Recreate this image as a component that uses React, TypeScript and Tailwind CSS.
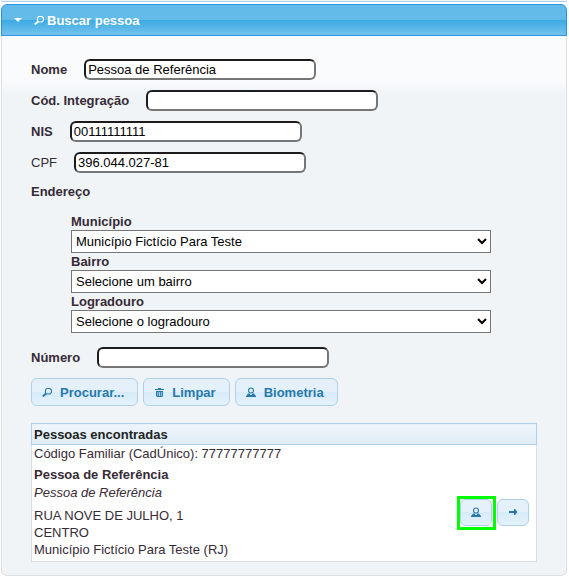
import { useState } from "react";
import type { ReactNode } from "react";

const SearchIcon = () => (
  <svg width="10" height="10" viewBox="0 0 10 10" fill="none" stroke="currentColor" aria-hidden="true">
    <path d="M4.500 1.500h3.500l1.500 1.500v2.500l-1.500 1.500H4.500l-1-1.500V3z" strokeWidth="1.100" />
    <path d="M4 6.500L.8 9.500" strokeWidth="1.900" />
  </svg>
);

const TrashIcon = () => (
  <svg width="10" height="10" viewBox="0 0 10 10" fill="currentColor" aria-hidden="true">
    <path d="M4 1h3v1h3v1H1V2h3z" />
    <path d="M2 4h7v5l-1 1H3L2 9zM3.500 5v4h.7V5zM5.200 5v4h.7V5zM6.900 5v4h.7V5z" fillRule="evenodd" />
  </svg>
);

const PersonIcon = () => (
  <svg width="10" height="10" viewBox="0 0 10 10" aria-hidden="true">
    <circle cx="5" cy="3.500" r="2.500" fill="none" stroke="currentColor" strokeWidth="1.100" />
    <path d="M2 6.500h1.500L4.500 8h1l1-1.500H8L9 8l1 1v1H0V9l1-1z" fill="currentColor" />
  </svg>
);

const ArrowIcon = () => (
  <svg width="10" height="10" viewBox="0 0 10 10" fill="currentColor" aria-hidden="true">
    <path d="M1 4h5V2h1l2.500 3L7 8H6V6H1z" />
  </svg>
);

const buttonLook =
  "flex items-center rounded-md border border-[#aed0ea] bg-[linear-gradient(#e4f1fb_50%,#d7ebf9_50%,#e4f2fc)] text-[#2779aa] hover:border-[#74b2e2]";

type FieldProps = {
  id: string;
  label: string;
  value?: string;
  bold?: boolean;
};

const Field = ({ id, label, value = "", bold = true }: FieldProps) => {
  const [text, setText] = useState(value);

  return (
    <div className="flex h-[21px] items-center gap-[17px]">
      <label htmlFor={id} className={bold ? "font-bold" : "font-normal"}>
        {label}
      </label>
      <input
        id={id}
        type="text"
        value={text}
        onChange={(e) => setText(e.target.value)}
        className="h-[21px] w-[232px] rounded-md border-2 border-t-[#1c1c1c] border-r-[#767676] border-b-[#767676] border-l-[#1c1c1c] bg-white px-[2px] text-black"
      />
    </div>
  );
};

const SelectField = ({ id, label, option }: { id: string; label: string; option: string }) => (
  <div>
    <label htmlFor={id} className="block leading-[17px] font-bold">
      {label}
    </label>
    <select
      id={id}
      className="block h-[23px] w-full rounded-none border border-[#767676] bg-white text-black"
    >
      <option>{option}</option>
    </select>
  </div>
);

const TextButton = ({ icon, children }: { icon: ReactNode; children: string }) => (
  <button
    type="button"
    className={`${buttonLook} h-7 gap-2 pr-[13px] pl-[10px] font-bold`}
  >
    {icon}
    {children}
  </button>
);

const IconButton = ({ icon, label }: { icon: ReactNode; label: string }) => (
  <button
    type="button"
    aria-label={label}
    className={`${buttonLook} h-[27px] w-8 justify-center`}
  >
    {icon}
  </button>
);

const App = () => {
  return (
    <div className="min-h-screen bg-white pr-[2px] pl-[1px] font-['Liberation_Sans',Arial,sans-serif] text-[13px] leading-[17px] text-[#362b36]">
      <div className="mb-[2px] h-[2px] rounded-b-md border-b border-[#aed0ea] bg-[#eef5fa]" />
      <section>
        <h3 className="flex h-8 items-center rounded-t-md border border-[#2694e8] bg-[linear-gradient(#63bbe9_50%,#3baae3_50%,#74c2ec)] pl-3 font-bold text-white">
          <svg width="8" height="4" viewBox="0 0 8 4" fill="currentColor" aria-hidden="true">
            <path d="M0 0h8L4 4z" />
          </svg>
          <span className="ml-3 flex items-center gap-[3px]">
            <SearchIcon />
            Buscar pessoa
          </span>
        </h3>
        <form
          className="rounded-b-md border border-t-0 border-[#dddddd] bg-[#f0f4f7] bg-[linear-gradient(#fafbfd_0px,#fafbfd_42px,#f0f4f7_60px)] px-[29px] pt-[23px] pb-[13px]"
          onSubmit={(e) => e.preventDefault()}
        >
          <div className="flex flex-col gap-[10px]">
            <Field id="nome" label="Nome" value="Pessoa de Referência" />
            <Field id="integracao" label="Cód. Integração" />
            <Field id="nis" label="NIS" value="00111111111" />
            <Field id="cpf" label="CPF" value="396.044.027-81" bold={false} />
          </div>
          <fieldset className="mt-[10px]">
            <legend className="font-bold">Endereço</legend>
            <div className="mt-[13px] mr-[46px] ml-10 flex flex-col">
              <SelectField id="municipio" label="Município" option="Município Fictício Para Teste" />
              <SelectField id="bairro" label="Bairro" option="Selecione um bairro" />
              <SelectField id="logradouro" label="Logradouro" option="Selecione o logradouro" />
            </div>
          </fieldset>
          <div className="mt-[14px]">
            <Field id="numero" label="Número" />
          </div>
          <div className="mt-[10px] flex gap-[5px]">
            <TextButton icon={<SearchIcon />}>Procurar...</TextButton>
            <TextButton icon={<TrashIcon />}>Limpar</TextButton>
            <TextButton icon={<PersonIcon />}>Biometria</TextButton>
          </div>
          <table className="mt-[17px] w-full border-collapse border border-[#dddddd] bg-white text-left">
            <thead>
              <tr>
                <th
                  scope="col"
                  colSpan={2}
                  className="h-[21px] border border-[#aed0ea] bg-[linear-gradient(#eff6fc,#deedf7)] px-[2px] text-[#222222]"
                >
                  Pessoas encontradas
                </th>
              </tr>
            </thead>
            <tbody>
              <tr>
                <td className="px-[2px] pb-[3px]">
                  <p>Código Familiar (CadÚnico): 77777777777</p>
                  <p className="mt-1 font-bold">Pessoa de Referência</p>
                  <p className="mt-[1px] italic">Pessoa de Referência</p>
                  <p className="mt-[6px]">
                    RUA NOVE DE JULHO, 1
                    <br />
                    CENTRO
                    <br />
                    Município Fictício Para Teste (RJ)
                  </p>
                </td>
                <td className="pt-[18px] pr-[7px]">
                  <div className="flex justify-end gap-[5px]">
                    <div className="relative">
                      <IconButton icon={<PersonIcon />} label="Biometria" />
                      <span className="pointer-events-none absolute -inset-[3px] -right-1 -bottom-1 border-3 border-[#00ff00]" />
                    </div>
                    <IconButton icon={<ArrowIcon />} label="Selecionar" />
                  </div>
                </td>
              </tr>
            </tbody>
          </table>
        </form>
      </section>
    </div>
  );
};

export default App;
